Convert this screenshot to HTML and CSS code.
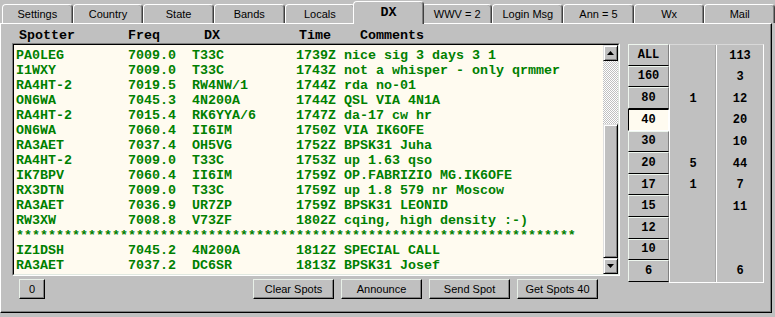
FILE: index.html
```html
<!DOCTYPE html>
<html lang="en">

<head>
    <meta charset="UTF-8">
    <meta name="viewport" content="width=device-width, initial-scale=1.0">
    <title>DX</title>
    <link rel="stylesheet" href="styles.css">
</head>

<body>
    <div class="tabs">
        <div class="tab">Settings</div>
        <div class="tab">Country</div>
        <div class="tab">State</div>
        <div class="tab">Bands</div>
        <div class="tab">Locals</div>
        <div class="tab active">DX</div>
        <div class="tab">WWV = 2</div>
        <div class="tab">Login Msg</div>
        <div class="tab">Ann = 5</div>
        <div class="tab">Wx</div>
        <div class="tab">Mail</div>
    </div>

    <div class="panel">
        <div class="main">
            <div class="spots">
                <div class="head">
                    <span>Spotter</span><span>Freq</span><span>DX</span><span>Time</span><span>Comments</span>
                </div>

                <div class="listbox">
                    <div class="list-inner">
                        <div class="rows">
                            <div class="row"><span>PA0LEG</span><span>7009.0</span><span>T33C</span><span>1739Z</span><span>nice sig 3 days 3 1</span></div>
                            <div class="row"><span>I1WXY</span><span>7009.0</span><span>T33C</span><span>1743Z</span><span>not a whisper - only qrmmer</span></div>
                            <div class="row"><span>RA4HT-2</span><span>7019.5</span><span>RW4NW/1</span><span>1744Z</span><span>rda no-01</span></div>
                            <div class="row"><span>ON6WA</span><span>7045.3</span><span>4N200A</span><span>1744Z</span><span>QSL VIA 4N1A</span></div>
                            <div class="row"><span>RA4HT-2</span><span>7015.4</span><span>RK6YYA/6</span><span>1747Z</span><span>da-17 cw hr</span></div>
                            <div class="row"><span>ON6WA</span><span>7060.4</span><span>II6IM</span><span>1750Z</span><span>VIA IK6OFE</span></div>
                            <div class="row"><span>RA3AET</span><span>7037.4</span><span>OH5VG</span><span>1752Z</span><span>BPSK31 Juha</span></div>
                            <div class="row"><span>RA4HT-2</span><span>7009.0</span><span>T33C</span><span>1753Z</span><span>up 1.63 qso</span></div>
                            <div class="row"><span>IK7BPV</span><span>7060.4</span><span>II6IM</span><span>1759Z</span><span>OP.FABRIZIO MG.IK6OFE</span></div>
                            <div class="row"><span>RX3DTN</span><span>7009.0</span><span>T33C</span><span>1759Z</span><span>up 1.8 579 nr Moscow</span></div>
                            <div class="row"><span>RA3AET</span><span>7036.9</span><span>UR7ZP</span><span>1759Z</span><span>BPSK31 LEONID</span></div>
                            <div class="row"><span>RW3XW</span><span>7008.8</span><span>V73ZF</span><span>1802Z</span><span>cqing, high density :-)</span></div>
                            <div class="row sep">**********************************************************************</div>
                            <div class="row"><span>IZ1DSH</span><span>7045.2</span><span>4N200A</span><span>1812Z</span><span>SPECIAL CALL</span></div>
                            <div class="row"><span>RA3AET</span><span>7037.2</span><span>DC6SR</span><span>1813Z</span><span>BPSK31 Josef</span></div>
                        </div>

                        <div class="scrollbar">
                            <div class="sb-btn">
                                <svg width="7" height="4" viewBox="0 0 7 4"><path d="M3.5 0L7 4H0z" /></svg>
                            </div>
                            <div class="track">
                                <div class="thumb"></div>
                            </div>
                            <div class="sb-btn">
                                <svg width="7" height="4" viewBox="0 0 7 4"><path d="M0 0h7L3.5 4z" /></svg>
                            </div>
                        </div>
                    </div>
                </div>

                <div class="actions">
                    <div class="btn small">0</div>
                    <div class="btn">Clear Spots</div>
                    <div class="btn">Announce</div>
                    <div class="btn">Send Spot</div>
                    <div class="btn">Get Spots 40</div>
                </div>
            </div>

            <div class="bands">
                <div class="band-btns">
                    <div class="band">ALL</div>
                    <div class="band">160</div>
                    <div class="band">80</div>
                    <div class="band selected">40</div>
                    <div class="band">30</div>
                    <div class="band">20</div>
                    <div class="band">17</div>
                    <div class="band">15</div>
                    <div class="band">12</div>
                    <div class="band">10</div>
                    <div class="band">6</div>
                </div>
                <div class="counts">
                    <div class="count-col">
                        <div class="cell"></div>
                        <div class="cell"></div>
                        <div class="cell">1</div>
                        <div class="cell"></div>
                        <div class="cell"></div>
                        <div class="cell">5</div>
                        <div class="cell">1</div>
                        <div class="cell"></div>
                        <div class="cell"></div>
                        <div class="cell"></div>
                        <div class="cell"></div>
                    </div>
                    <div class="count-col">
                        <div class="cell">113</div>
                        <div class="cell">3</div>
                        <div class="cell">12</div>
                        <div class="cell">20</div>
                        <div class="cell">10</div>
                        <div class="cell">44</div>
                        <div class="cell">7</div>
                        <div class="cell">11</div>
                        <div class="cell"></div>
                        <div class="cell"></div>
                        <div class="cell">6</div>
                    </div>
                </div>
            </div>
        </div>
    </div>
</body>

</html>
```

FILE: styles.css
```css
html,
body {
    padding: 0;
    margin: 0;
}

body {
    width: 775px;
    height: 317px;
    overflow: hidden;
    background: #c0c0c0;
    color: #000;
    font-family: "Liberation Sans", Arial, sans-serif;
    font-size: 11px;
}

/* tab strip */
.tabs {
    display: flex;
    align-items: flex-end;
    height: 23px;
    padding-left: 2px;
}

.tab {
    flex: 1;
    height: 19px;
    box-sizing: border-box;
    display: flex;
    align-items: center;
    justify-content: center;
    border: 1px solid #fff;
    border-right-color: #404040;
    border-bottom: none;
    border-radius: 4px 4px 0 0;
    box-shadow: inset -1px 0 #808080;
    background: #c0c0c0;
}

.tab.active {
    position: relative;
    z-index: 1;
    height: 23px;
    margin: 0 -2px -1px;
    padding-bottom: 2px;
    font: bold 13.33px "Liberation Mono", monospace;
}

/* main panel */
.panel {
    width: 772px;
    height: 290px;
    box-sizing: border-box;
    border: 1px solid #fff;
    border-right-color: #000;
    border-bottom-color: #000;
    box-shadow: inset -1px -1px #808080;
}

.main {
    display: flex;
    padding: 4px 0 0 11px;
}

.spots {
    width: 608px;
}

.head {
    display: grid;
    grid-template-columns: 109px 76px 95px 61px auto;
    height: 15px;
    padding-left: 7px;
    font: bold 13.33px/15px "Liberation Mono", monospace;
}

.listbox {
    height: 233px;
    box-sizing: border-box;
    border: 1px solid;
    border-color: #808080 #fff #fff #808080;
}

.list-inner {
    display: flex;
    height: 100%;
    box-sizing: border-box;
    border: 1px solid;
    border-color: #000 #e0e8e0 #e0e8e0 #000;
    background: #fffbf0;
}

.rows {
    flex: 1;
    overflow: hidden;
    padding: 3px 0 0 2px;
    color: #008000;
    font: bold 13.33px/15px "Liberation Mono", monospace;
    white-space: nowrap;
}

.row {
    display: grid;
    grid-template-columns: 112px 64px 104px 48px auto;
    height: 15px;
}

.row.sep {
    display: block;
}

/* scrollbar */
.scrollbar {
    width: 15px;
    display: flex;
    flex-direction: column;
}

.sb-btn,
.thumb {
    box-sizing: border-box;
    background: #c0c0c0;
    border: 1px solid;
    border-color: #e0e0e0 #000 #000 #e0e0e0;
    box-shadow: inset 1px 1px #fff, inset -1px -1px #808080;
}

.sb-btn {
    height: 16px;
    display: flex;
    align-items: center;
    justify-content: center;
}

.track {
    flex: 1;
    display: flex;
    flex-direction: column;
    justify-content: flex-end;
    background: repeating-conic-gradient(#fff 0 25%, #c0c0c0 0 50%) 0 0 / 2px 2px;
}

.thumb {
    height: 134px;
}

/* bottom buttons */
.actions {
    display: flex;
    gap: 7px;
    margin-top: 3px;
    padding: 0 22px 0 7px;
}

.btn {
    width: 81px;
    height: 20px;
    box-sizing: border-box;
    display: flex;
    align-items: center;
    justify-content: center;
    border: 1px solid;
    border-color: #e8f0e8 #000 #000 #e8f0e8;
    box-shadow: inset -1px -1px #808080;
}

.btn.small {
    width: 26px;
    margin-right: auto;
}

/* band selector */
.bands {
    display: flex;
    margin: 16px 0 0 8px;
}

.band-btns {
    display: flex;
    flex-direction: column;
    width: 41px;
}

.band {
    height: 21.64px;
    box-sizing: border-box;
    display: flex;
    align-items: center;
    justify-content: center;
    border: 1px solid;
    border-color: #eef6ee #808080 #000 #eef6ee;
    font: bold 12px "Liberation Mono", monospace;
}

.band.selected {
    background: #fffbf0;
    border-color: #000 #fff #fff #000;
}

.counts {
    display: flex;
    height: 239px;
    box-sizing: border-box;
    border: 1px solid #fff;
    border-top-color: #d8d8d8;
}

.count-col {
    width: 46px;
    display: flex;
    flex-direction: column;
}

.count-col + .count-col {
    border-left: 1px solid #fff;
    box-shadow: -1px 0 #a8a8a8;
}

.cell {
    height: 21.64px;
    display: flex;
    align-items: center;
    justify-content: center;
    font: bold 12px "Liberation Mono", monospace;
}
```
